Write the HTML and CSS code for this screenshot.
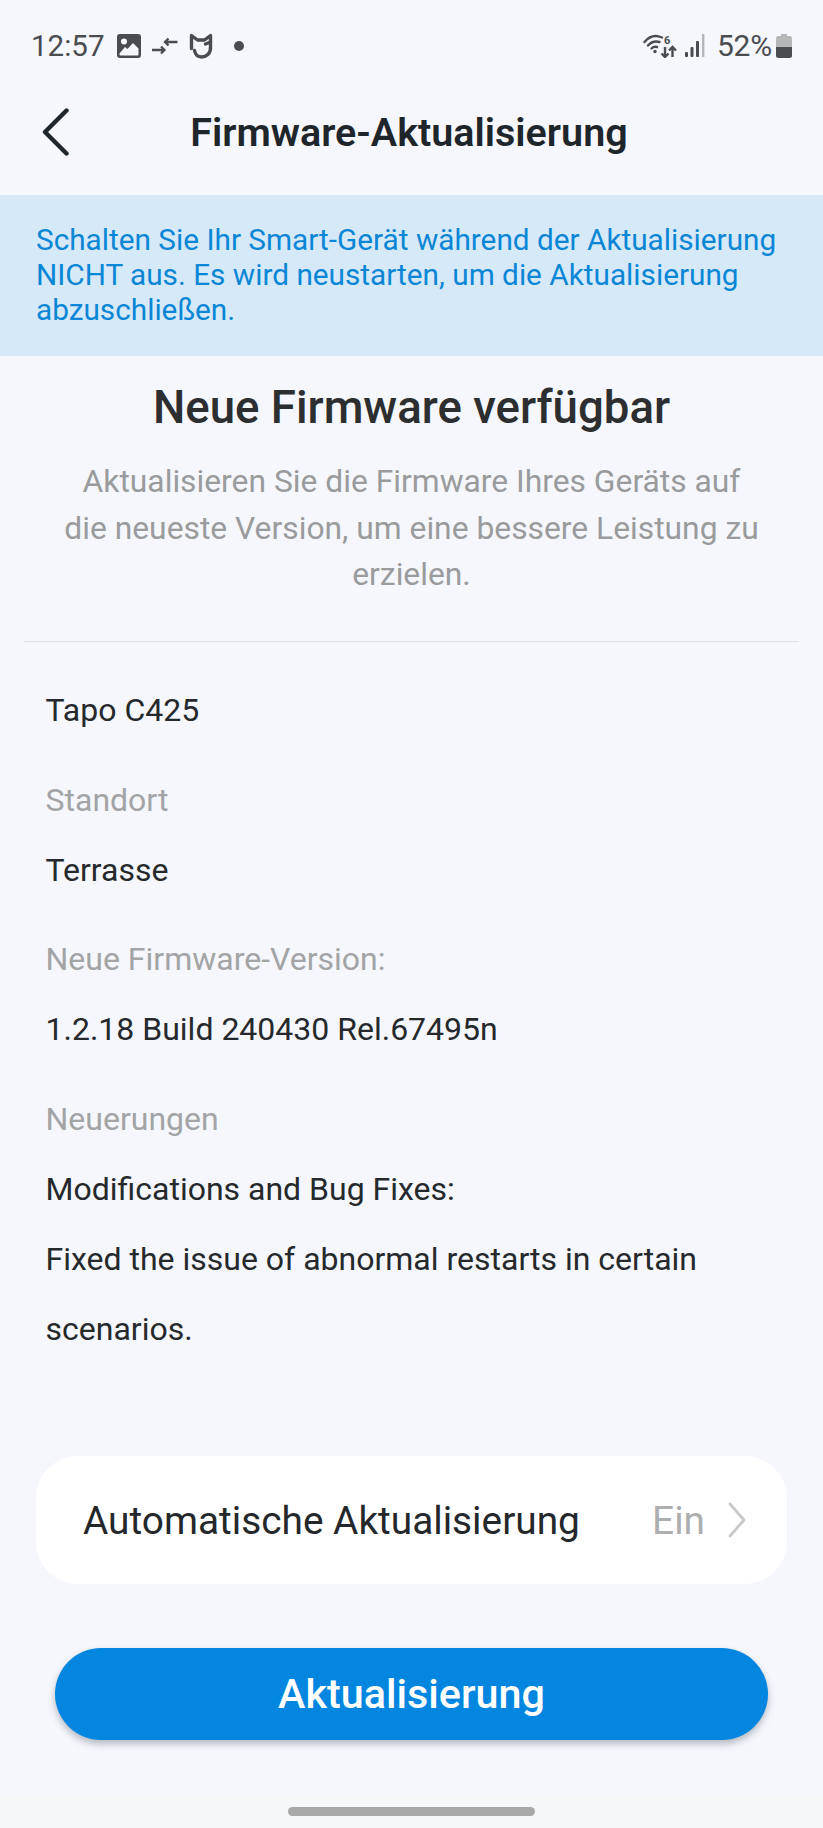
FILE: index.html
```html
<!DOCTYPE html>
<html lang="de">
<head>
<meta charset="utf-8">
<title>Firmware-Aktualisierung</title>
<link rel="stylesheet" href="styles.css">
</head>
<body>
<div class="page">
  <div class="status">
    <div class="status-left">
      <span class="time">12:57</span>
      <svg class="ic-img" viewBox="0 0 24 24"><path fill="#4a4c50" fill-rule="evenodd" d="M3 0h18a3 3 0 0 1 3 3v18a3 3 0 0 1-3 3H3a3 3 0 0 1-3-3V3a3 3 0 0 1 3-3zM7 4.500a3 3 0 1 0 0 6 3 3 0 0 0 0-6zM2.500 19.500v1a1 1 0 0 0 1 1h17a1 1 0 0 0 1-1v-6L16 9l-5.500 6-2.500-2z"/></svg>
      <svg class="ic-sync" viewBox="0 0 26 18"><g fill="none" stroke="#4a4c50" stroke-width="2.300"><path d="M0 13h12.500M9 9.500l3.500 3.500L9 16.500"/><path d="M25.500 5H13M16.500 1.500L13 5l3.500 3.500"/></g></svg>
      <svg class="ic-mi" viewBox="0 0 24 26"><g fill="none" stroke="#4a4c50" stroke-width="3.400" stroke-linejoin="round" stroke-linecap="round"><path d="M2.500 15.500V2.500L8.500 7h7l6-4.500V15"/><path d="M16.500 11l5-2"/><path d="M5.500 17.500c1 4.500 4 6.500 7 6.500 5 0 9-3.500 9-9"/></g></svg>
      <span class="dot"></span>
    </div>
    <div class="status-right">
      <svg class="ic-wifi" viewBox="0 0 34 24"><g fill="none" stroke="#4a4c50" stroke-width="2.400" stroke-linecap="round"><path d="M1.500 8Q9 -1 19 3.500"/><path d="M5 11.500Q10 6 16.500 8"/><path d="M8.500 14.500Q11 12 14 13"/></g><circle cx="12" cy="17.500" r="1.700" fill="#4a4c50"/><text x="21" y="10" class="wifi-six">6</text><g fill="none" stroke="#4a4c50" stroke-width="2.400"><path d="M22 13v10M18.500 19.500l3.500 3.500 3.500-3.500"/><path d="M29.500 23V13M26 16.500l3.500-3.500 3.500 3.500"/></g></svg>
      <svg class="ic-signal" viewBox="0 0 20 24"><rect x="0" y="18" width="3" height="5" rx="1" fill="#4a4c50"/><rect x="5.500" y="13" width="3" height="10" rx="1" fill="#4a4c50"/><rect x="11" y="7" width="3" height="16" rx="1" fill="#4a4c50"/><rect x="17" y="0" width="2.400" height="23" fill="#b4b6b8"/></svg>
      <span class="pct">52%</span>
      <svg class="ic-batt" viewBox="0 0 16 24"><path fill="#b4b6b8" d="M5 0h6v2h2.500A2.500 2.500 0 0 1 16 4.500V13H0V4.500A2.500 2.500 0 0 1 2.500 2H5z"/><path fill="#4a4c50" d="M0 13h16v8.500a2.500 2.500 0 0 1-2.500 2.500h-11A2.500 2.500 0 0 1 0 21.500z"/></svg>
    </div>
  </div>

  <header class="nav">
    <svg class="back" viewBox="0 0 28 48"><path fill="none" stroke="#1f262b" stroke-width="4.400" stroke-linecap="round" stroke-linejoin="round" d="M24.500 2.500L3 24l21.500 21.500"/></svg>
    <h1 class="nav-title">Firmware-Aktualisierung</h1>
  </header>

  <div class="banner">Schalten Sie Ihr Smart-Gerät während der Aktualisierung NICHT aus. Es wird neustarten, um die Aktualisierung abzuschließen.</div>

  <section class="intro">
    <h2 class="intro-title">Neue Firmware verfügbar</h2>
    <p class="intro-text">Aktualisieren Sie die Firmware Ihres Geräts auf die neueste Version, um eine bessere Leistung zu erzielen.</p>
  </section>

  <section class="details">
    <p class="val">Tapo C425</p>
    <p class="lbl">Standort</p>
    <p class="val">Terrasse</p>
    <p class="lbl">Neue Firmware-Version:</p>
    <p class="val">1.2.18 Build 240430 Rel.67495n</p>
    <p class="lbl">Neuerungen</p>
    <p class="val">Modifications and Bug Fixes:<br>Fixed the issue of abnormal restarts in certain scenarios.</p>
  </section>

  <div class="card">
    <span class="card-label">Automatische Aktualisierung</span>
    <span class="card-value">Ein</span>
    <svg class="chev" viewBox="0 0 20 36"><path fill="none" stroke="#c8c9cb" stroke-width="2.800" stroke-linecap="round" stroke-linejoin="round" d="M3 2l14 16L3 34"/></svg>
  </div>

  <button class="update">Aktualisierung</button>

  <div class="homebar"><span class="pill"></span></div>
</div>
</body>
</html>
```
FILE: styles.css
```css
* { box-sizing: border-box; }
html, body { margin: 0; padding: 0; }
body { background: #f5f7fc; font-family: Roboto, "Liberation Sans", sans-serif; }
.page { width: 823px; height: 1828px; display: flex; flex-direction: column; overflow: hidden; }

.status { height: 90px; padding: 28px 31px 0 31px; display: flex; justify-content: space-between; align-items: flex-start; color: #4a4c50; }
.status-left, .status-right { display: flex; align-items: center; height: 36px; }
.time { font-size: 29.500px; line-height: 36px; margin-right: 13px; }
.pct { font-size: 30px; line-height: 36px; margin: 0 4px 0 12px; letter-spacing: -0.2px; }
.ic-img { width: 24px; height: 24px; margin-right: 11px; }
.ic-sync { width: 26px; height: 18px; margin-right: 11px; }
.ic-mi { width: 24px; height: 26px; }
.dot { width: 10px; height: 10px; border-radius: 50%; background: #4a4c50; margin-left: 21px; }
.ic-wifi { width: 34px; height: 24px; margin-right: 8px; }
.ic-signal { width: 20px; height: 24px; }
.wifi-six { font: 700 11px Roboto, sans-serif; fill: #4a4c50; }
.ic-batt { width: 16px; height: 24px; }

.nav { height: 105px; position: relative; display: flex; align-items: center; justify-content: center; padding-right: 5px; }
.nav-title { margin: 0 0 20px; font-size: 39.500px; font-weight: 600; color: #1f262b; line-height: 44px; }
.back { position: absolute; left: 42px; top: 18px; width: 28px; height: 48px; }

.banner { height: 161px; padding: 27px 36px 0; background: #d6e9f8; color: #0a86d6; font-size: 29.750px; line-height: 35px; }

.intro { padding: 24px 24px 0; height: 285px; text-align: center; }
.intro-title { margin: 0; font-size: 45.600px; font-weight: 500; line-height: 56px; color: #2c2e30; }
.intro-text { margin: 22px 0 0; padding: 0 36px; font-size: 31.800px; line-height: 46.600px; color: #9a9b9d; }

.details { margin: 0 24px; padding: 34px 21.500px 0; border-top: 1px solid #e1e2e4; flex: 1; }
.details p { margin: 0; font-size: 32px; }
.details .val { color: #26292c; line-height: 69.700px; }
.details .lbl { color: #a3a4a6; line-height: 72px; margin-top: 18px; }

.card { margin: 0 36px; height: 128px; background: #fff; border-radius: 42px; display: flex; align-items: center; padding: 0 40px 0 47px; }
.card-label { font-size: 38.800px; color: #25282b; flex: 1; }
.card-value { font-size: 38.800px; color: #acaeb0; margin-right: 22px; }
.chev { width: 20px; height: 36px; }

.update { display: block; position: relative; z-index: 1; margin: 64px 55px 0; height: 92px; border: 0; border-radius: 46px; background: #0286e0; color: #fff; font-family: inherit; font-size: 41.300px; font-weight: 500; box-shadow: 0 4px 7px rgba(60, 70, 90, .35); }

.homebar { height: 88px; display: flex; justify-content: center; align-items: flex-end; padding-bottom: 12px; background: linear-gradient(#f5f7fc 54px, #f6f7f9 54px); }
.pill { width: 247px; height: 9px; border-radius: 5px; background: #a8a8a8; }
```
